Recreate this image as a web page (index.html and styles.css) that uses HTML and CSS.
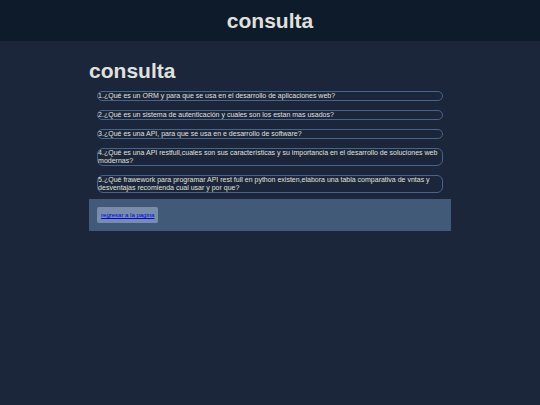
FILE: index.html
```html
<!DOCTYPE html>
<html lang="es">
<head>
<meta charset="utf-8">
<meta name="viewport" content="width=device-width, initial-scale=1">
<title>consulta</title>
<link rel="stylesheet" href="styles.css">
</head>
<body>
<header class="banner"><h1 class="title">consulta</h1></header>
<main class="content">
<h1 class="title">consulta</h1>
<div class="questions">
<p class="question">1.¿Qué es un ORM y para que se usa en el desarrollo de aplicaciones web?</p>
<p class="question">2.¿Qué es un sistema de autenticación y cuales son los estan mas usados?</p>
<p class="question">3.¿Qué es una API, para que se usa en e desarrollo de software?</p>
<p class="question">4.¿Qué es una API restfull,cuales son sus características y su importancia en el desarrollo de soluciones web modernas?</p>
<p class="question">5.¿Qué frawework para programar API rest full en python existen,elabora una tabla comparativa de vntas y desventajas recomienda cual usar y por que?</p>
</div>
<nav class="actions"><a class="back" href="#">regresar a la pagina</a></nav>
</main>
</body>
</html>
```

FILE: styles.css
```css
* {
  box-sizing: border-box;
}

body {
  margin: 0;
  background: #1b263b;
  color: #e0e1dd;
  font-family: "Liberation Sans", Arial, sans-serif;
  font-size: 7px;
  line-height: 8px;
}

.banner {
  padding: 9px 8px 8px;
  background: #0d1b2a;
  text-align: center;
}

.title {
  margin: 0;
  font-size: 21px;
  line-height: 24px;
}

.content {
  width: 67%;
  margin: 18px auto 0;
}

.questions {
  display: grid;
  gap: 9px;
  padding: 8px 8px 6px;
}

.question {
  margin: 0;
  border: 1px solid #48648a;
  border-radius: 6px;
}

.actions {
  display: flex;
  padding: 8px;
  background: #415a77;
}

.back {
  padding: 4px;
  border-radius: 2px;
  background: #778da9;
  color: #0000ee;
  font-size: 6px;
}
```
